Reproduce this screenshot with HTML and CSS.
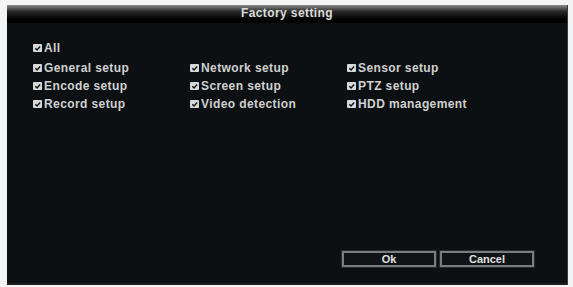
FILE: index.html
```html
<!DOCTYPE html>
<html>
<head>
<meta charset="utf-8">
<link rel="stylesheet" href="styles.css">
</head>
<body>
<div class="dialog">
  <div class="titlebar">Factory setting</div>
  <div class="content">
    <div class="row-all">
      <label class="item"><span class="cb"><svg viewBox="0 0 10 8" width="10" height="8"><path d="M2.5 3.8 L4.5 5.8 L8 1.8" fill="none" stroke="#111" stroke-width="1.6"/></svg></span>All</label>
    </div>
    <div class="grid">
      <label class="item"><span class="cb"><svg viewBox="0 0 10 8" width="10" height="8"><path d="M2.5 3.8 L4.5 5.8 L8 1.8" fill="none" stroke="#111" stroke-width="1.6"/></svg></span>General setup</label>
      <label class="item"><span class="cb"><svg viewBox="0 0 10 8" width="10" height="8"><path d="M2.5 3.8 L4.5 5.8 L8 1.8" fill="none" stroke="#111" stroke-width="1.6"/></svg></span>Network setup</label>
      <label class="item"><span class="cb"><svg viewBox="0 0 10 8" width="10" height="8"><path d="M2.5 3.8 L4.5 5.8 L8 1.8" fill="none" stroke="#111" stroke-width="1.6"/></svg></span>Sensor setup</label>
      <label class="item"><span class="cb"><svg viewBox="0 0 10 8" width="10" height="8"><path d="M2.5 3.8 L4.5 5.8 L8 1.8" fill="none" stroke="#111" stroke-width="1.6"/></svg></span>Encode setup</label>
      <label class="item"><span class="cb"><svg viewBox="0 0 10 8" width="10" height="8"><path d="M2.5 3.8 L4.5 5.8 L8 1.8" fill="none" stroke="#111" stroke-width="1.6"/></svg></span>Screen setup</label>
      <label class="item"><span class="cb"><svg viewBox="0 0 10 8" width="10" height="8"><path d="M2.5 3.8 L4.5 5.8 L8 1.8" fill="none" stroke="#111" stroke-width="1.6"/></svg></span>PTZ setup</label>
      <label class="item"><span class="cb"><svg viewBox="0 0 10 8" width="10" height="8"><path d="M2.5 3.8 L4.5 5.8 L8 1.8" fill="none" stroke="#111" stroke-width="1.6"/></svg></span>Record setup</label>
      <label class="item"><span class="cb"><svg viewBox="0 0 10 8" width="10" height="8"><path d="M2.5 3.8 L4.5 5.8 L8 1.8" fill="none" stroke="#111" stroke-width="1.6"/></svg></span>Video detection</label>
      <label class="item"><span class="cb"><svg viewBox="0 0 10 8" width="10" height="8"><path d="M2.5 3.8 L4.5 5.8 L8 1.8" fill="none" stroke="#111" stroke-width="1.6"/></svg></span>HDD management</label>
    </div>
    <div class="spacer"></div>
    <div class="buttons">
      <button class="btn">Ok</button>
      <button class="btn">Cancel</button>
    </div>
  </div>
</div>
</body>
</html>
```

FILE: styles.css
```css
html, body {
  margin: 0;
  padding: 0;
  background: #f4f4f4;
}
body {
  padding: 5px 5px 2px 7px;
  font-family: "Liberation Sans", Arial, sans-serif;
}
.dialog {
  width: 561px;
  height: 280px;
  background: #0d1013;
  border-right: 1px solid #3a3d40;
  display: flex;
  flex-direction: column;
  box-sizing: border-box;
}
.titlebar {
  height: 18px;
  line-height: 16px;
  text-align: center;
  color: #dcdcdc;
  font-size: 12px;
  font-weight: bold;
  letter-spacing: 0.4px;
  background: linear-gradient(#8a8a8a 0%, #2a2a2a 35%, #050505 75%, #000 100%);
}
.content {
  flex: 1;
  display: flex;
  flex-direction: column;
  padding: 16px 0 0 26px;
  border-bottom: 2px solid #1c1f22;
}
.item {
  display: flex;
  align-items: center;
  color: #d0d0d0;
  font-size: 12px;
  font-weight: bold;
  letter-spacing: 0.4px;
  height: 18px;
  white-space: nowrap;
}
.cb {
  width: 9px;
  height: 8px;
  background: #d8d8d8;
  border-radius: 1px;
  margin-right: 2px;
  display: flex;
  align-items: center;
  justify-content: center;
  overflow: hidden;
}
.cb svg {
  width: 9px;
  height: 7px;
}
.row-all {
  margin-bottom: 2px;
}
.grid {
  display: grid;
  grid-template-columns: 157px 157px 157px;
}
.spacer {
  flex: 1;
}
.buttons {
  display: flex;
  gap: 4px;
  padding: 0 0 16px 309px;
}
.btn {
  width: 94px;
  height: 16px;
  background: #111416;
  border: 2px solid #7a7c7e;
  outline: 1px solid #2a2c2e;
  color: #e0e0e0;
  font-family: "Liberation Sans", Arial, sans-serif;
  font-size: 11px;
  font-weight: bold;
  padding: 0;
  line-height: 12px;
}
```
